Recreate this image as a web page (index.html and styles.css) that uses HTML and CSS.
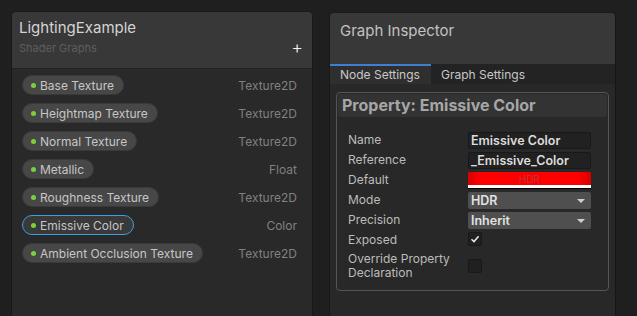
FILE: index.html
```html
<!DOCTYPE html>
<html>
<head>
<meta charset="utf-8">
<link rel="stylesheet" href="styles.css">
</head>
<body>
<div class="panel blackboard">
  <div class="bb-header">
    <div class="bb-title">LightingExample</div>
    <div class="bb-sub-row">
      <span class="bb-sub">Shader Graphs</span>
      <span class="plus">+</span>
    </div>
  </div>
  <div class="bb-list">
    <div class="row"><span class="pill"><i class="dot"></i>Base Texture</span><span class="type">Texture2D</span></div>
    <div class="row"><span class="pill"><i class="dot"></i>Heightmap Texture</span><span class="type">Texture2D</span></div>
    <div class="row"><span class="pill"><i class="dot"></i>Normal Texture</span><span class="type">Texture2D</span></div>
    <div class="row"><span class="pill"><i class="dot"></i>Metallic</span><span class="type">Float</span></div>
    <div class="row"><span class="pill"><i class="dot"></i>Roughness Texture</span><span class="type">Texture2D</span></div>
    <div class="row"><span class="pill selected"><i class="dot"></i>Emissive Color</span><span class="type">Color</span></div>
    <div class="row"><span class="pill"><i class="dot"></i>Ambient Occlusion Texture</span><span class="type">Texture2D</span></div>
  </div>
</div>
<div class="panel inspector">
  <div class="gi-header">Graph Inspector</div>
  <div class="tabs">
    <div class="tab active">Node Settings</div>
    <div class="tab">Graph Settings</div>
  </div>
  <div class="gi-body">
    <div class="prop-box">
      <div class="prop-title">Property: Emissive Color</div>
      <div class="fields">
        <div class="label">Name</div>
        <div class="text-field">Emissive Color</div>
        <div class="label">Reference</div>
        <div class="text-field">_Emissive_Color</div>
        <div class="label">Default</div>
        <div class="color-field"><div class="color-swatch">HDR</div><div class="alpha-bar"></div></div>
        <div class="label">Mode</div>
        <div class="dropdown">HDR<span class="arrow"></span></div>
        <div class="label">Precision</div>
        <div class="dropdown">Inherit<span class="arrow"></span></div>
        <div class="label">Exposed</div>
        <div class="check-cell"><span class="checkbox"><svg width="10" height="10" viewBox="0 0 10 10"><path d="M1.5 5.2 L4 7.6 L8.6 2.2" fill="none" stroke="#e8e8e8" stroke-width="1.5"/></svg></span></div>
        <div class="label two-line">Override Property Declaration</div>
        <div class="check-cell tall"><span class="checkbox"></span></div>
      </div>
    </div>
  </div>
</div>
</body>
</html>
```

FILE: styles.css
```css
html, body {
  margin: 0;
  padding: 0;
  height: 100%;
  overflow: hidden;
}
body {
  background: #1f1f1f;
  font-family: Inter, "Noto Sans", sans-serif;
  display: flex;
  align-items: flex-start;
  padding: 11px 0 0 11px;
  box-sizing: border-box;
  gap: 16px;
}
.panel {
  border: 1px solid #191919;
  border-bottom: none;
  border-radius: 5px 5px 0 0;
  overflow: hidden;
  box-sizing: border-box;
}
.blackboard {
  width: 302px;
  height: 305px;
  background: #292929;
}
.bb-header {
  background: #383838;
  height: 57px;
  box-sizing: border-box;
  padding: 6px 9px 0 7px;
  border-bottom: 1px solid #232323;
}
.bb-title {
  color: #d4d4d4;
  font-size: 15px;
  line-height: 19px;
}
.bb-sub-row {
  display: flex;
  justify-content: space-between;
  align-items: center;
  margin-top: 3px;
}
.bb-sub {
  color: #5e5e5e;
  font-size: 11px;
}
.plus {
  color: #f0f0f0;
  font-size: 18px;
  line-height: 16px;
  font-weight: 300;
}
.bb-list {
  padding: 6px 15px 0 10px;
  display: flex;
  flex-direction: column;
  gap: 8px;
}
.row {
  display: flex;
  justify-content: space-between;
  align-items: center;
  height: 20px;
}
.pill {
  display: inline-flex;
  align-items: center;
  height: 20px;
  box-sizing: border-box;
  padding: 0 9px 0 8px;
  border-radius: 10px;
  background: #474747;
  border: 1px solid #3a3a3a;
  color: #c6c6c6;
  font-size: 12px;
}
.pill.selected {
  background: #393939;
  border: 1px solid #3d9ee0;
}
.dot {
  width: 5px;
  height: 5px;
  border-radius: 50%;
  background: #79d23c;
  margin-right: 4px;
}
.type {
  color: #808080;
  font-size: 12px;
}
.inspector {
  width: 287px;
  height: 304px;
  margin-top: 1px;
  background: #282828;
  border-right-color: #151515;
}
.gi-header {
  background: #383838;
  height: 51px;
  box-sizing: border-box;
  padding: 8px 10px 0 10px;
  color: #c2c2c2;
  font-size: 15px;
}
.tabs {
  display: flex;
  height: 20px;
  background: #232323;
}
.tab {
  color: #c8c8c8;
  font-size: 12px;
  line-height: 18px;
  padding: 0 10px;
  border-top: 2px solid transparent;
}
.tab.active {
  background: #2f2f2f;
  border-top-color: #3f7fcf;
  width: 101px;
  box-sizing: border-box;
}
.gi-body {
  padding: 8px 6px 0 6px;
}
.prop-box {
  border: 1px solid #555;
  border-radius: 4px;
  padding: 1px 1px 10px 1px;
}
.prop-title {
  background: #333;
  border-radius: 3px;
  height: 23px;
  line-height: 23px;
  padding-left: 4px;
  color: #a6a6a6;
  font-size: 16px;
  font-weight: 700;
}
.fields {
  display: grid;
  grid-template-columns: 120px 123px;
  row-gap: 3px;
  padding: 15px 0 0 10px;
}
.label {
  color: #bcbcbc;
  font-size: 12px;
  line-height: 15px;
  height: 17px;
}
.label.two-line {
  height: auto;
  line-height: 14px;
  width: 110px;
}
.text-field {
  height: 17px;
  box-sizing: border-box;
  background: #212121;
  border: 1px solid #191919;
  border-radius: 2px;
  color: #dcdcdc;
  font-size: 12.5px;
  font-weight: 600;
  line-height: 15px;
  padding-left: 2px;
}
.color-field {
  height: 17px;
  box-sizing: border-box;
  background: #000;
  border-bottom: 1px solid #000;
  display: flex;
  flex-direction: column;
}
.color-swatch {
  height: 13px;
  background: linear-gradient(90deg, #d40000 0%, #ff0000 10%, #ff0000 90%, #d40000 100%);
  color: #b03c3c;
  font-size: 10px;
  line-height: 14px;
  text-align: center;
}
.alpha-bar {
  height: 3px;
  background: #fff;
}
.dropdown {
  position: relative;
  height: 17px;
  box-sizing: border-box;
  background: #4f4f4f;
  border-radius: 2px;
  color: #e2e2e2;
  font-size: 12.5px;
  font-weight: 600;
  line-height: 17px;
  padding-left: 3px;
}
.arrow {
  position: absolute;
  right: 6px;
  top: 7px;
  width: 0;
  height: 0;
  border-left: 4px solid transparent;
  border-right: 4px solid transparent;
  border-top: 4px solid #cfcfcf;
}
.check-cell {
  height: 17px;
  display: flex;
  align-items: flex-start;
}
.check-cell.tall {
  align-items: center;
  height: auto;
}
.checkbox {
  width: 14px;
  height: 14px;
  box-sizing: border-box;
  background: #202020;
  border: 1px solid #191919;
  border-radius: 2px;
  display: flex;
  align-items: center;
  justify-content: center;
}
```
